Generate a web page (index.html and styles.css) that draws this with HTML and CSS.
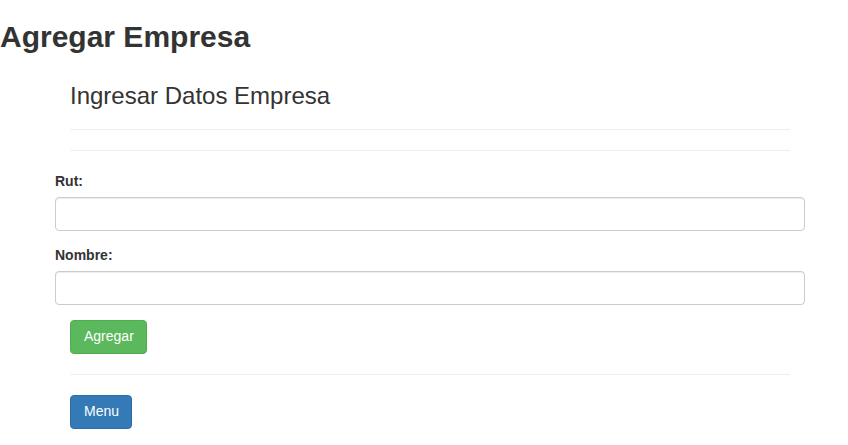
FILE: index.html
```html
<!DOCTYPE html>
<html lang="es">
<head>
<meta charset="utf-8">
<title>Agregar Empresa</title>
<link rel="stylesheet" href="styles.css">
</head>
<body>
<h2 class="page-title">Agregar Empresa</h2>
<div class="panel">
  <div class="section">
    <h3 class="section-title">Ingresar Datos Empresa</h3>
    <hr class="divider">
    <hr class="divider">
  </div>
  <form class="form">
    <div class="form-group">
      <label class="label" for="rut">Rut:</label>
      <input class="input" id="rut" type="text">
    </div>
    <div class="form-group">
      <label class="label" for="nombre">Nombre:</label>
      <input class="input" id="nombre" type="text">
    </div>
    <div class="section">
      <button type="button" class="btn btn-success">Agregar</button>
      <hr class="divider">
      <button type="button" class="btn btn-primary">Menu</button>
    </div>
  </form>
</div>
</body>
</html>
```
FILE: styles.css
```css
html, body {
  margin: 0;
  padding: 0;
  background: #fff;
}
body {
  font-family: "Liberation Sans", Arial, Helvetica, sans-serif;
  font-size: 14px;
  line-height: 1.42857;
  color: #333;
}
.page-title {
  font-size: 30px;
  font-weight: bold;
  line-height: 1.1;
  margin: 20px 0 10px 0;
}
.panel {
  margin-left: 55px;
  width: 750px;
  display: flow-root;
}
.section {
  padding: 0 15px;
  display: flow-root;
}
.section-title {
  font-size: 24px;
  font-weight: normal;
  line-height: 1.1;
  margin: 20px 0 10px 0;
}
.divider {
  margin: 20px 0;
  border: 0;
  border-top: 1px solid #eee;
  height: 0;
}
.form {
  margin: 1px 0 0 0;
  display: flow-root;
}
.form-group {
  margin-bottom: 15px;
}
.label {
  display: inline-block;
  font-weight: bold;
  margin-bottom: 5px;
  max-width: 100%;
}
.input {
  display: block;
  box-sizing: border-box;
  width: 100%;
  height: 34px;
  padding: 6px 12px;
  font: inherit;
  color: #555;
  background: #fff;
  border: 1px solid #ccc;
  border-radius: 4px;
  box-shadow: inset 0 1px 1px rgba(0, 0, 0, 0.075);
  margin: 0;
}
.btn {
  display: inline-block;
  padding: 6px 12px 6px 13px;
  font-family: inherit;
  font-size: 14px;
  line-height: 1.42857;
  border: 1px solid transparent;
  border-radius: 4px;
  color: #fff;
  cursor: pointer;
  margin: 0;
  vertical-align: middle;
}
.btn-success {
  background: #5cb85c;
  border-color: #4cae4c;
}
.btn-primary {
  background: #337ab7;
  border-color: #2e6da4;
}
```
